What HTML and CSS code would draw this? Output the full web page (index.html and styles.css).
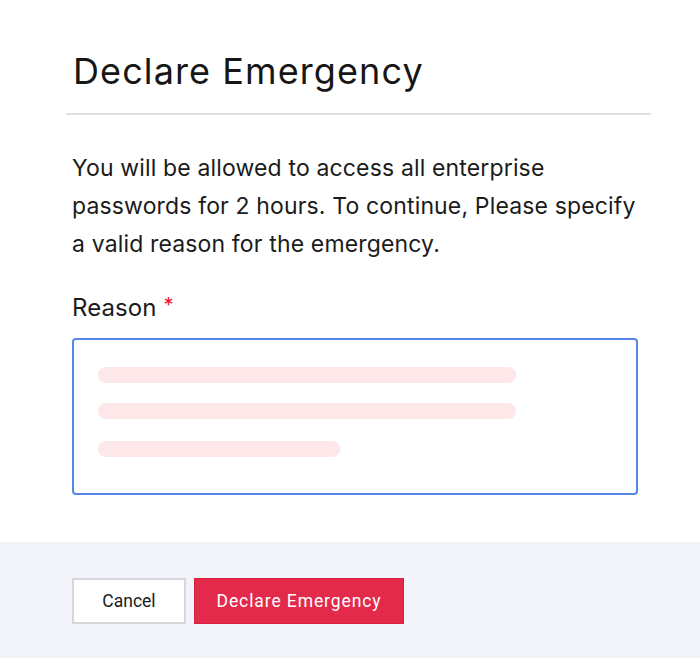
FILE: index.html
```html
<!DOCTYPE html>
<html>
<head>
<meta charset="utf-8">
<link rel="stylesheet" href="styles.css">
</head>
<body>
<div class="dialog">
  <div class="header">
    <h1 class="title">Declare Emergency</h1>
  </div>
  <div class="divider"></div>
  <div class="body">
    <p class="desc">You will be allowed to access all enterprise passwords for 2 hours. To continue, Please specify a valid reason for the emergency.</p>
    <label class="label">Reason <span class="req">*</span></label>
    <div class="field">
      <div class="bar bar-long"></div>
      <div class="bar bar-long"></div>
      <div class="bar bar-short"></div>
    </div>
  </div>
  <div class="footer">
    <button class="btn btn-cancel">Cancel</button>
    <button class="btn btn-primary">Declare Emergency</button>
  </div>
</div>
</body>
</html>
```
FILE: styles.css
```css
* { box-sizing: border-box; }
html, body { margin: 0; padding: 0; background: #fff; }
body { font-family: "Inter", "Lato", sans-serif; color: #1b1b1b; }
.dialog { width: 700px; height: 658px; display: flex; flex-direction: column; }
.header { padding: 46px 0 0 73px; height: 113px; }
.title { margin: 0; font-size: 36px; font-weight: 400; line-height: 50px; letter-spacing: 1.1px; color: #161616; }
.divider { margin: 0 49px 0 66px; height: 2px; background: #e0e0e0; }
.body { padding: 34px 62px 0 72px; flex: 1; }
.desc { margin: 0; max-width: 572px; font-size: 23px; line-height: 38px; letter-spacing: 0.15px; color: #1b1b1b; }
.label { display: block; margin-top: 27px; font-size: 24px; line-height: 30px; color: #1b1b1b; letter-spacing: 0.1px; }
.req { color: #f2121f; font-size: 20px; vertical-align: 4px; }
.field { margin-top: 15px; height: 157px; border: 2px solid #5587e8; border-radius: 4px; padding: 27px 0 0 24px; display: flex; flex-direction: column; gap: 20px; }
.bar { height: 16px; border-radius: 8px; background: #fde7e8; }
.bar-long { width: 418px; }
.bar-short { width: 242px; margin-top: 2px; }
.footer { height: 116px; background: #f3f4f9; display: flex; align-items: flex-start; gap: 8px; padding: 36px 0 0 72px; }
.btn { height: 46px; font-family: "Roboto", sans-serif; font-size: 17.5px; border-radius: 0; cursor: pointer; padding: 0; }
.btn-cancel { width: 114px; background: #fff; border: 2px solid #d6d7db; color: #1b1b1b; }
.btn-primary { width: 210px; background: #e32a4a; border: 1px solid #d6223f; color: #fff; letter-spacing: 0.9px; }
```
